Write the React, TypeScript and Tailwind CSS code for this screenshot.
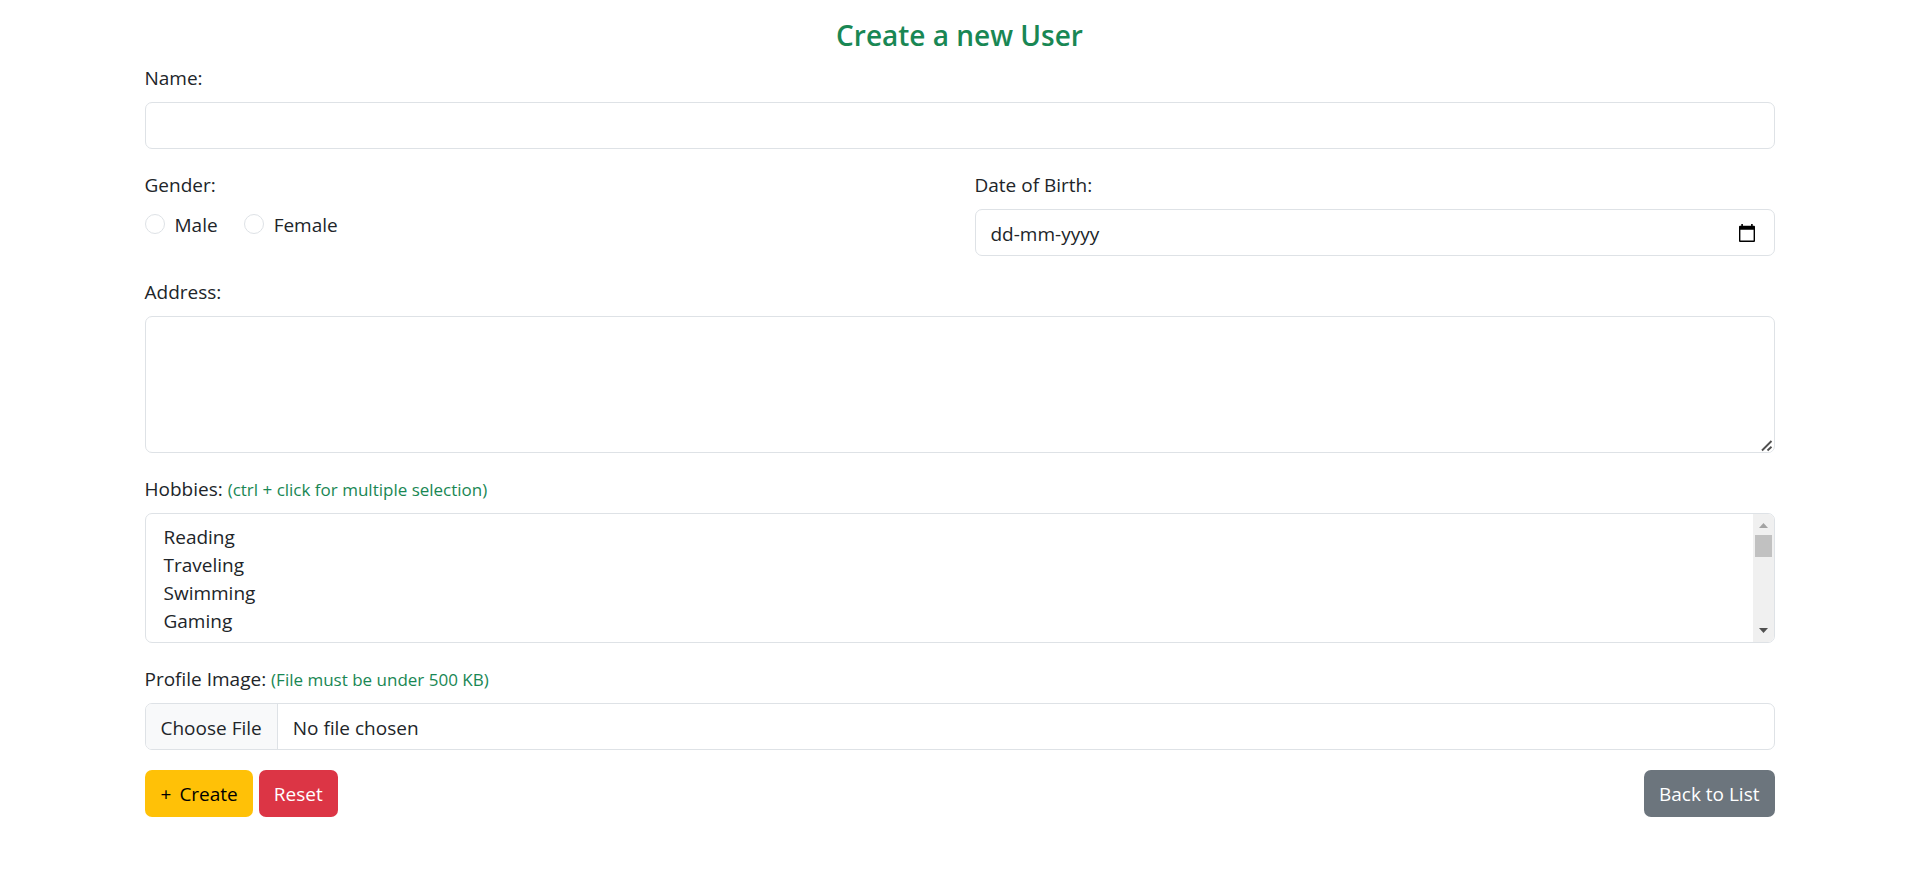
import { useState } from 'react';
import type { ReactNode, UIEvent } from 'react';

const HOBBIES = [
  'Reading', 'Traveling', 'Swimming', 'Gaming', 'Cooking', 'Dancing', 'Singing', 'Painting', 'Drawing',
  'Writing', 'Gardening', 'Photography', 'Cycling', 'Hiking', 'Fishing', 'Yoga', 'Music',
];

const frame = 'rounded-[7px] border border-[#dee2e6] bg-white';
const control = `${frame} block w-full text-[19px] leading-[30px] text-[#212529] outline-none focus:border-[#86b7fe]`;
const button = 'rounded-[7px] px-[15px] pt-[9px] pb-[7px] leading-[31px]';

function Field({ id, label, hint, children }: { id: string; label: string; hint?: string; children: ReactNode }) {
  return (
    <div className="mb-5">
      <label htmlFor={id} className="mb-2 block h-8 leading-8">
        {label} {hint && <span className="text-[17px] leading-none text-[#198754]">{hint}</span>}
      </label>
      {children}
    </div>
  );
}

function Radio({ id, label }: { id: string; label: string }) {
  return (
    <div className="flex items-start gap-[10px]">
      <input
        type="radio"
        id={id}
        name="gender"
        value={id}
        className="mt-[5px] size-5 appearance-none rounded-full border border-[#dee2e6] bg-white checked:border-[6px] checked:border-[#0d6efd]"
      />
      <label htmlFor={id} className="leading-8">{label}</label>
    </div>
  );
}

function CalendarIcon() {
  return (
    <svg viewBox="0 0 16 18" className="h-[18px] w-4" aria-hidden="true">
      <path d="M1 1.7H2.3V0H3.9V1.7H12.1V0H13.7V1.7H15Q16 1.7 16 2.7V17Q16 18 15 18H1Q0 18 0 17V2.7Q0 1.7 1 1.7ZM1.4 5.7V16.6H14.6V5.7Z" fill="#000" fillRule="evenodd" />
    </svg>
  );
}

function HobbyList({ id }: { id: string }) {
  const [progress, setProgress] = useState(0);
  const onScroll = (e: UIEvent<HTMLSelectElement>) => {
    const el = e.currentTarget;
    setProgress(el.scrollTop / Math.max(1, el.scrollHeight - el.clientHeight));
  };
  return (
    <div className={`${frame} relative overflow-hidden pt-[10px] pr-[21px] pb-[6px] pl-[15px]`}>
      <select
        id={id}
        multiple
        size={4}
        onScroll={onScroll}
        className="block h-28 w-full overflow-y-scroll outline-none [scrollbar-width:none]"
      >
        {HOBBIES.map((hobby) => (
          <option key={hobby} className="h-7 px-[3px] py-0 leading-7">
            {hobby}
          </option>
        ))}
      </select>
      <div aria-hidden="true" className="pointer-events-none absolute inset-y-0 right-0 flex w-[21px] flex-col items-center bg-[#f0f0f0]">
        <svg viewBox="0 0 21 21" className="size-[21px]">
          <path d="M6 14L10.5 9L15 14Z" fill="#a3a3a3" />
        </svg>
        <div className="relative w-[17px] flex-1">
          <div className="absolute h-[22px] w-full bg-[#c1c1c1]" style={{ top: `calc(${progress} * (100% - 22px))` }} />
        </div>
        <svg viewBox="0 0 21 21" className="size-[21px]">
          <path d="M6 7L10.5 12L15 7Z" fill="#505050" />
        </svg>
      </div>
    </div>
  );
}

export default function App() {
  return (
    <main className="mx-auto max-w-[1650px] px-[10px] pt-4 pb-8 font-['Open_Sans','Noto_Sans',sans-serif] text-[19px] leading-[30px] text-[#212529]">
      <h1 className="mb-2 text-center text-[28px] leading-[38px] font-semibold text-[#198754]">Create a new User</h1>
      <form onSubmit={(e) => e.preventDefault()}>
        <Field id="name" label="Name:">
          <input id="name" type="text" className={`${control} h-[47px] px-[15px]`} />
        </Field>

        <div className="grid grid-cols-2 gap-[30px]">
          <fieldset>
            <legend className="mb-2 leading-8">Gender:</legend>
            <div className="flex gap-[26px]">
              <Radio id="male" label="Male" />
              <Radio id="female" label="Female" />
            </div>
          </fieldset>
          <Field id="dob" label="Date of Birth:">
            <div className="relative">
              <input
                id="dob"
                type="text"
                placeholder="dd-mm-yyyy"
                className={`${control} h-[47px] pt-[2px] pr-12 pl-[15px] placeholder:text-[#212529]`}
              />
              <button type="button" aria-label="Open calendar" className="absolute inset-y-0 right-5 flex items-center">
                <CalendarIcon />
              </button>
            </div>
          </Field>
        </div>

        <Field id="address" label="Address:">
          <div className="relative">
            <textarea id="address" className={`${control} h-[137px] resize-y px-[15px] py-[7px]`} />
            <svg viewBox="0 0 12 12" className="pointer-events-none absolute right-[2px] bottom-px size-3" aria-hidden="true">
              <path d="M0 0H12V9L9 12H0Z" fill="#fff" />
              <path d="M1 10.5L10.5 1M6.5 10.5L10.5 6.8" stroke="#505050" strokeWidth="1.9" />
            </svg>
          </div>
        </Field>

        <Field id="hobbies" label="Hobbies:" hint="(ctrl + click for multiple selection)">
          <HobbyList id="hobbies" />
        </Field>

        <Field id="image" label="Profile Image:" hint="(File must be under 500 KB)">
          <input
            id="image"
            type="file"
            className={`${control} h-[47px] overflow-hidden file:mr-[15px] file:h-[45px] file:border-r file:border-[#dee2e6] file:bg-[#f8f9fa] file:px-[15px] file:pt-[2px] file:text-[#212529]`}
          />
        </Field>

        <div className="flex gap-[6px]">
          <button type="submit" className={`${button} flex gap-2 bg-[#ffc107] text-black`}>
            <span className="pl-px">+</span>
            <span>Create</span>
          </button>
          <button type="reset" className={`${button} bg-[#dc3545] text-white`}>Reset</button>
          <a href="#list" className={`${button} ml-auto bg-[#6c757d] text-white`}>Back to List</a>
        </div>
      </form>
    </main>
  );
}
